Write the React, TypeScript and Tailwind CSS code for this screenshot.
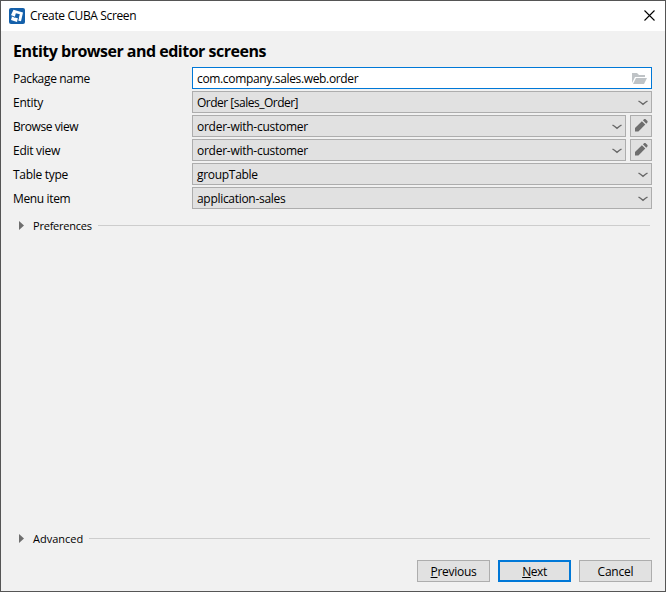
import type { ReactNode } from "react";

function Chevron() {
  return (
    <svg width="10" height="6" viewBox="0 0 10 6" className="mt-px shrink-0" fill="none" stroke="#666666" strokeWidth="1.3">
      <path d="M.5 1 2.500 2.300 5 4.300 7.500 2.300 9.500 1" />
    </svg>
  );
}

function Select({ children, tracking }: { children: ReactNode; tracking: string }) {
  return (
    <div className="flex h-[22px] min-w-0 flex-1 items-center justify-between border border-[#adadad] bg-[#e1e1e1] pr-[3px] pl-1">
      <span className={`pt-0.5 whitespace-nowrap ${tracking}`}>{children}</span>
      <Chevron />
    </div>
  );
}

function Pencil() {
  return (
    <button className="flex size-[22px] items-center justify-center border border-[#adadad] bg-[#e1e1e1]">
      <svg width="16" height="16" viewBox="0 0 16 16" fill="#6e6e6e">
        <path d="M2 13.500v-3.400L8.900 3.200l3.400 3.400L5.400 13.500z" />
        <path d="m9.900 2.300.9-.9c.6-.6 1.500-.6 2.100 0l1.300 1.300c.6.6.6 1.500 0 2.100l-.9.9z" />
      </svg>
    </button>
  );
}

function Row({ label, tracking, children }: { label: string; tracking: string; children: ReactNode }) {
  return (
    <div className="flex h-[22px] items-center">
      <label className={`w-[179px] shrink-0 pt-0.5 ${tracking}`}>{label}</label>
      <div className="flex min-w-0 flex-1 gap-1">{children}</div>
    </div>
  );
}

function Section({ label, tracking }: { label: string; tracking: string }) {
  return (
    <div className="flex h-4 items-center pr-0.5 pl-[6px] text-[11px]">
      <svg width="5" height="9" viewBox="0 0 5 9" fill="#6e6e6e">
        <path d="M0 0v9l5-4.500z" />
      </svg>
      <span className={`ml-[9px] pt-0.5 whitespace-nowrap ${tracking}`}>{label}</span>
      <div className="ml-1.5 h-px flex-1 bg-[#cdcdcd]" />
    </div>
  );
}

export default function App() {
  return (
    <div className="flex h-[592px] w-[666px] flex-col border border-[#555555] bg-[#f1f1f1] font-['Open_Sans','Noto_Sans',sans-serif] text-[12px] leading-4 text-black">
      <header className="flex h-[30px] shrink-0 items-center bg-white pr-[10px] pl-2">
        <svg width="16" height="16" viewBox="0 0 16 16" fill="none" className="-mt-px">
          <rect width="16" height="16" rx="2" fill="#1460aa" />
          <path d="M4.500 1.800 14 4.500 12 13.300 9 12.500 8 14 2 12 3 8.500 1.800 7.500z" fill="white" />
          <path d="M6.800 5.200 10.800 6.300 9.700 10.500 5.700 9.400z" fill="#1460aa" />
          <path d="M2 7.600 6 9.300M8.500 13.500 9.500 10" stroke="#1460aa" strokeWidth="1" />
        </svg>
        <span className="ml-[5px] flex-1 tracking-[-0.37px]">Create CUBA Screen</span>
        <svg width="11" height="11" viewBox="0 0 11 11" stroke="black" strokeWidth="1.100" className="-mt-px">
          <path d="m.5.500 10 10M10.500.500l-10 10" />
        </svg>
      </header>
      <main className="flex flex-1 flex-col pr-[13px] pl-3">
        <h1 className="mt-2.5 h-[26px] text-[16px] leading-5 font-bold tracking-[-0.5px]">Entity browser and editor screens</h1>
        <div className="flex flex-col gap-0.5">
          <Row label="Package name" tracking="tracking-[-0.33px]">
            <div className="flex h-[22px] flex-1 items-center justify-between border border-[#0078d7] bg-white pr-1 pl-1">
              <span className="pt-0.5 tracking-[-0.34px]">com.company.sales.web.order</span>
              <svg width="15" height="12" viewBox="0 0 15 12" className="mt-0.5">
                <path d="M0 10V0h5l2 2h6v2H3z" fill="#bfc3c6" />
                <path d="M4 5h11l-3 6H1z" fill="#bfc3c6" />
              </svg>
            </div>
          </Row>
          <Row label="Entity" tracking="tracking-[-0.27px]"><Select tracking="tracking-[-0.5px]">Order [sales_Order]</Select></Row>
          <Row label="Browse view" tracking="tracking-[-0.43px]"><Select tracking="tracking-[-0.26px]">order-with-customer</Select><Pencil /></Row>
          <Row label="Edit view" tracking="tracking-[-0.28px]"><Select tracking="tracking-[-0.26px]">order-with-customer</Select><Pencil /></Row>
          <Row label="Table type" tracking="tracking-[-0.28px]"><Select tracking="tracking-[-0.3px]">groupTable</Select></Row>
          <Row label="Menu item" tracking="tracking-[-0.35px]"><Select tracking="tracking-[-0.3px]">application-sales</Select></Row>
        </div>
        <div className="mt-2"><Section label="Preferences" tracking="tracking-[-0.22px]" /></div>
        <div className="flex-1" />
        <Section label="Advanced" tracking="" />
        <footer className="mt-[14px] mb-[9px] flex justify-end gap-2">
          <button className="h-[22px] w-[73px] border border-[#adadad] bg-[#e1e1e1] pt-px tracking-[-0.3px]"><u>P</u>revious</button>
          <button className="h-[22px] w-[73px] border-2 border-[#0078d7] bg-[#e1e1e1] pt-px tracking-[-0.4px]"><u>N</u>ext</button>
          <button className="h-[22px] w-[73px] border border-[#adadad] bg-[#e1e1e1] pt-px tracking-[-0.2px]">Cancel</button>
        </footer>
      </main>
    </div>
  );
}
